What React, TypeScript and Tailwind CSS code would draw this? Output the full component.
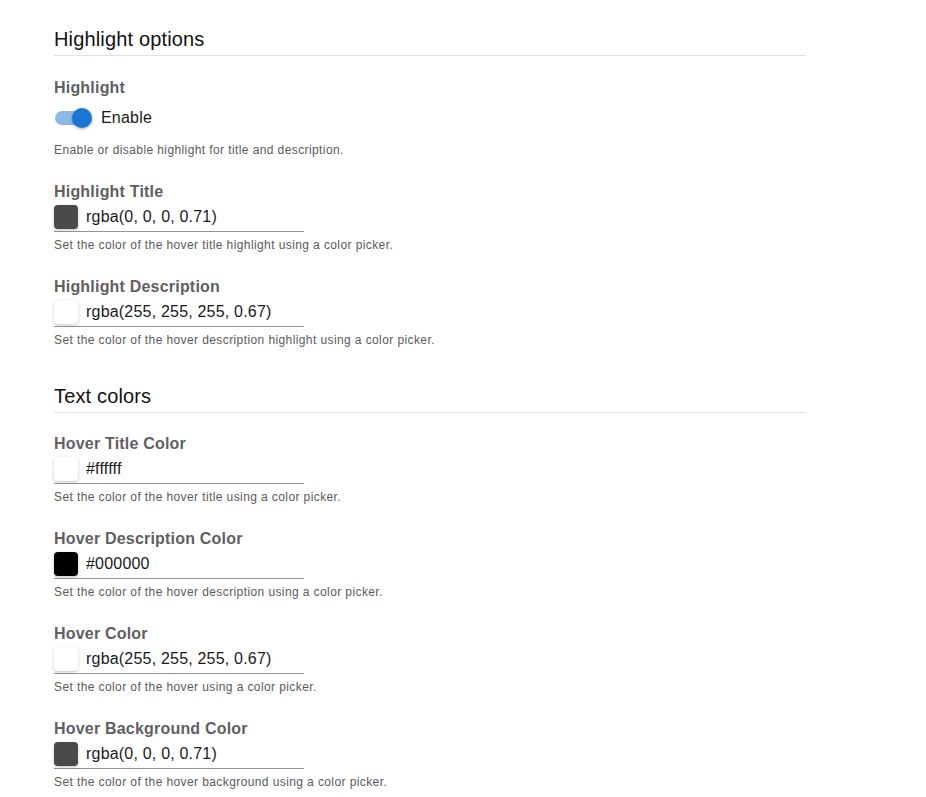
import React from "react";

type Field = { label: string; value: string; swatch: string; help: string };

const highlightFields: Field[] = [
  {
    label: "Highlight Title",
    value: "rgba(0, 0, 0, 0.71)",
    swatch: "dark",
    help: "Set the color of the hover title highlight using a color picker.",
  },
  {
    label: "Highlight Description",
    value: "rgba(255, 255, 255, 0.67)",
    swatch: "white",
    help: "Set the color of the hover description highlight using a color picker.",
  },
];

const textFields: Field[] = [
  {
    label: "Hover Title Color",
    value: "#ffffff",
    swatch: "white",
    help: "Set the color of the hover title using a color picker.",
  },
  {
    label: "Hover Description Color",
    value: "#000000",
    swatch: "black",
    help: "Set the color of the hover description using a color picker.",
  },
  {
    label: "Hover Color",
    value: "rgba(255, 255, 255, 0.67)",
    swatch: "white",
    help: "Set the color of the hover using a color picker.",
  },
  {
    label: "Hover Background Color",
    value: "rgba(0, 0, 0, 0.71)",
    swatch: "dark",
    help: "Set the color of the hover background using a color picker.",
  },
];

function Swatch({ kind }: { kind: string }) {
  const cls =
    kind === "dark"
      ? "bg-[#4a4a4a]"
      : kind === "black"
      ? "bg-[#000000]"
      : "bg-white";
  return (
    <div
      className={`w-6 h-6 rounded-[4px] shrink-0 shadow-[0_1px_3px_rgba(0,0,0,0.25)] ${cls}`}
    />
  );
}

function ColorField({ f, first }: { f: Field; first?: boolean }) {
  return (
    <div className={first ? "mt-[21px]" : "mt-[25px]"}>
      <div className="text-[16px] leading-[20px] font-bold tracking-[0.2px] text-[#5f5f63]">
        {f.label}
      </div>
      <div className="mt-[1px] w-[250px] h-[29px] flex items-center gap-2 border-b border-[#949494] pb-[1px]">
        <Swatch kind={f.swatch} />
        <span className="text-[16px] leading-[20px] tracking-[0.2px] text-[#1a1a1a]">
          {f.value}
        </span>
      </div>
      <div className="mt-[6px] text-[12px] leading-[14px] tracking-[0.4px] text-[#5a5a5a]">
        {f.help}
      </div>
    </div>
  );
}

function SectionHeading({ title, className }: { title: string; className: string }) {
  return (
    <div className={`border-b border-[#e2e2e2] pb-[4px] ${className}`}>
      <h2 className="text-[20px] leading-[24px] tracking-[0.15px] text-[#111111]">{title}</h2>
    </div>
  );
}

export default function App() {
  return (
    <div
      className="bg-white min-h-[797px] pl-[54px] pt-[27px]"
      style={{ fontFamily: '"Liberation Sans", Arial, sans-serif' }}
    >
      <div className="w-[752px]">
        <SectionHeading title="Highlight options" className="" />
        <div className="mt-[22px] text-[16px] leading-[20px] font-bold tracking-[0.2px] text-[#5f5f63]">
          Highlight
        </div>
        <div className="mt-[8px] flex items-center h-[24px]">
          <div className="relative w-[37px] h-[20px] ml-[1px]">
            <div className="absolute left-0 right-[1px] top-[3px] h-[14px] rounded-full bg-[#8cbae8]" />
            <div className="absolute right-0 top-0 w-5 h-5 rounded-full bg-[#1976d2] shadow-[0_1px_3px_rgba(0,0,0,0.35)]" />
          </div>
          <span className="ml-[9px] text-[16px] leading-[20px] tracking-[0.2px] text-[#1a1a1a]">
            Enable
          </span>
        </div>
        <div className="mt-[13px] text-[12px] leading-[14px] tracking-[0.4px] text-[#5a5a5a]">
          Enable or disable highlight for title and description.
        </div>
        {highlightFields.map((f) => (
          <ColorField key={f.label} f={f} />
        ))}
        <SectionHeading title="Text colors" className="mt-[37px]" />
        {textFields.map((f, i) => (
          <ColorField key={f.label} f={f} first={i === 0} />
        ))}
      </div>
    </div>
  );
}
